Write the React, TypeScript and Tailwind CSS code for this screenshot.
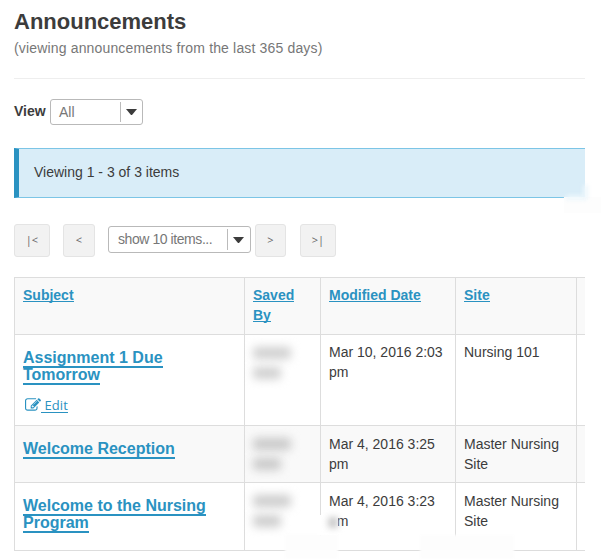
import React from "react";

type Row = {
  subject: string[];
  edit?: boolean;
  date: string[];
  site: string[];
  height: string;
  shade: string;
  smudge: string;
  textTop: string;
};

const rows: Row[] = [
  { subject: ["Assignment 1 Due", "Tomorrow"], edit: true, date: ["Mar 10, 2016 2:03", "pm"], site: ["Nursing 101"], height: "h-[91px]", shade: "bg-white", smudge: "bg-[#cfcfcf]", textTop: "pt-[7px]" },
  { subject: ["Welcome Reception"], date: ["Mar 4, 2016 3:25", "pm"], site: ["Master Nursing", "Site"], height: "h-[57px]", shade: "bg-[#f9f9f9]", smudge: "bg-[#c8c8c8]", textTop: "pt-2" },
  { subject: ["Welcome to the Nursing", "Program"], date: ["Mar 4, 2016 3:23", "pm"], site: ["Master Nursing", "Site"], height: "h-[68px]", shade: "bg-white", smudge: "bg-[#cccccc]", textTop: "pt-2" },
];

const columns = "grid grid-cols-[230px_76px_135px_121px_8px] border-b border-l border-[#dddddd]";
const cell = "border-r border-[#dddddd] pl-2";

function Lines({ items }: { items: string[] }) {
  return (
    <>
      {items.map((t) => (
        <div key={t} className="whitespace-nowrap">{t}</div>
      ))}
    </>
  );
}

function HeaderLink({ items }: { items: string[] }) {
  return (
    <div className={`${cell} pt-[7px] text-[#2a92c1]`}>
      {items.map((t) => (
        <div key={t} className="h-5">
          <span className="inline-block h-[17px] border-b border-[#2a92c1] align-top leading-5">{t}</span>
        </div>
      ))}
    </div>
  );
}

function Select({ label, className, arrow }: { label: string; className: string; arrow: string }) {
  return (
    <div className={`flex items-stretch rounded-[3px] border border-[#b9b9b9] bg-white text-[#777777] ${className}`}>
      <span className="flex-1 whitespace-nowrap leading-[25px]">{label}</span>
      <span className={`my-[2px] flex items-center justify-center border-l border-[#bbbbbb] ${arrow}`}>
        <svg width="11" height="6" viewBox="0 0 11 6" fill="#3c3c3c"><path d="M0 0h11L6 6H5z" /></svg>
      </span>
    </div>
  );
}

function PagerButton({ label, className }: { label: string; className: string }) {
  return (
    <button className={`h-[33px] rounded-[3px] border border-[#e4e4e4] bg-[#f2f2f2] pb-[2px] font-['Open_Sans',sans-serif] text-[11px] text-[#666666] ${className}`}>
      {label}
    </button>
  );
}

function EditIcon() {
  return (
    <svg viewBox="0 0 1792 1792" fill="currentColor" className="mt-px h-4 w-4">
      <path d="M888 1184l116-116-152-152-116 116v56h96v96h56zm440-720q-16-16-33 1l-350 350q-17 17-1 33t33-1l350-350q17-17 1-33zm80 594v190q0 119-84.5 203.5t-203.5 84.5h-832q-119 0-203.5-84.5t-84.5-203.5v-832q0-119 84.5-203.5t203.5-84.5h832q63 0 117 25 15 7 18 23 3 17-9 29l-49 49q-14 14-32 8-23-6-45-6h-832q-66 0-113 47t-47 113v832q0 66 47 113t113 47h832q66 0 113-47t47-113v-126q0-13 9-22l64-64q15-15 35-7t20 29zm-96-738l288 288-672 672h-288v-288zm444 132l-92 92-288-288 92-92q28-28 68-28t68 28l152 152q28 28 28 68t-28 68z" />
    </svg>
  );
}

export default function App() {
  return (
    <div className="relative h-[559px] w-[613px] overflow-hidden bg-white pl-[14px] font-['Liberation_Sans',Arial,sans-serif] text-[14px] leading-5 text-[#3c3c3c]">
      <div className="w-[571px]">
        <h1 className="pt-[9px] text-[22px] font-bold leading-[26px]">Announcements</h1>
        <p className="pt-[3px] tracking-[0.16px] text-[#777777]">(viewing announcements from the last 365 days)</p>
        <div className="mt-5 h-px bg-[#eeeeee]" />
        <div className="mt-5 flex h-[26px]">
          <span className="w-9 pt-[2px] font-bold">View</span>
          <Select label="All" className="w-[93px] pl-2 leading-[24px]" arrow="w-[22px]" />
        </div>
        <div className="mt-[23px] h-[50px] border-y border-l-[5px] border-y-[#7cc5e6] border-l-[#2a92c1] bg-[#d9edf8] pl-[15px] leading-[47px]">
          Viewing 1 - 3 of 3 items
        </div>
        <div className="mt-[26px] flex h-[33px]">
          <PagerButton label="|<" className="w-9" />
          <PagerButton label="<" className="ml-[13px] w-8" />
          <Select label="show 10 items..." className="ml-[13px] mt-[2px] h-[27px] w-[143px] pl-[9px] tracking-[-0.43px]" arrow="w-[23px] pr-px" />
          <PagerButton label=">" className="ml-1 w-[31px]" />
          <PagerButton label=">|" className="ml-[14px] w-9" />
        </div>
        <div className="mt-5 overflow-hidden border-t border-[#dddddd]">
          <div className={`${columns} h-[57px] bg-[#f9f9f9] font-bold`}>
            <HeaderLink items={["Subject"]} />
            <HeaderLink items={["Saved", "By"]} />
            <HeaderLink items={["Modified Date"]} />
            <HeaderLink items={["Site"]} />
            <div />
          </div>
          {rows.map((r) => (
            <div key={r.subject[0]} className={`${columns} ${r.height} ${r.shade}`}>
              <div className={`${cell} pt-[14px] text-[#2a92c1]`}>
                {r.subject.map((t) => (
                  <div key={t} className="h-[17px] text-[16px] font-bold leading-[17px]">
                    <span className="inline-block h-[19px] whitespace-nowrap border-b-2 border-[#2a92c1] align-top">{t}</span>
                  </div>
                ))}
                {r.edit && (
                  <div className="ml-[2px] mt-[13px] flex h-5 items-start font-['Open_Sans',sans-serif] text-[13px]">
                    <EditIcon />
                    <span className="h-[17px] whitespace-pre border-b border-[#2a92c1] tracking-[0.1px] leading-[19px]"> Edit</span>
                  </div>
                )}
              </div>
              <div className={`${cell} pt-[12px]`}>
                <div className={`h-3 w-[38px] rounded blur-[5px] ${r.smudge}`} />
                <div className={`mt-2 h-3 w-[28px] rounded blur-[5px] ${r.smudge}`} />
              </div>
              <div className={`${cell} ${r.textTop}`}><Lines items={r.date} /></div>
              <div className={`${cell} ${r.textTop}`}><Lines items={r.site} /></div>
              <div />
            </div>
          ))}
        </div>
      </div>
      {/* Soft patches covering the redacted spots */}
      <div className="absolute left-[564px] top-[197px] h-[16px] w-[37px] bg-[#fdfdfd]" />
      <div className="absolute left-[566px] top-[195px] h-[5px] w-[20px] bg-[#edf7fc] blur-[2px]" />
      <div className="absolute left-[583px] top-[185px] h-[13px] w-[5px] bg-[#edf7fc] blur-[2px]" />
      <div className="absolute left-[285px] top-[534px] h-[25px] w-[53px] bg-[#fdfdfd] blur-[1px]" />
      <div className="absolute left-[317px] top-[515px] h-[20px] w-[21px] bg-white" />
      <div className="absolute left-[328px] top-[517px] h-[11px] w-[10px] bg-[#cccccc] blur-[3px]" />
      <div className="absolute left-[420px] top-[535px] h-[24px] w-[94px] bg-[#fdfdfd] blur-[1px]" />
    </div>
  );
}
